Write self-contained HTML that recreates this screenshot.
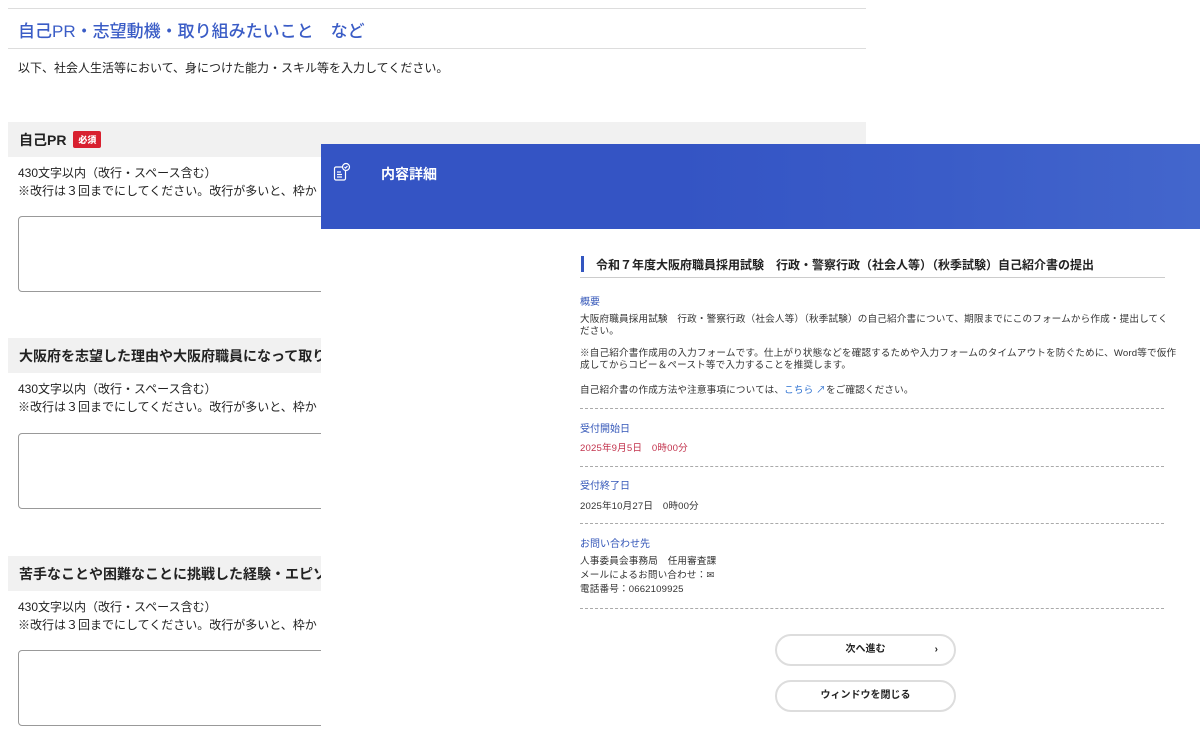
<!DOCTYPE html>
<html><head><meta charset="utf-8"><style>
*{margin:0;padding:0;box-sizing:border-box}
body{width:1200px;height:752px;overflow:hidden;background:#fff;font-family:"Liberation Sans","Noto Sans CJK JP",sans-serif;color:#222;position:relative}
.a{position:absolute;white-space:nowrap}
.band{position:absolute;left:8px;width:858px;height:35px;background:#f1f1f1}
.band span{position:absolute;left:11px;top:8px;font-size:14px;font-weight:bold}
.ta{position:absolute;left:18px;width:320px;height:76px;border:1.5px solid #999;border-radius:4px}
.s{font-size:12px}
.rp{position:absolute;left:321px;top:144px;width:879px;height:608px;background:#fff}
.hd{position:absolute;left:0;top:0;width:879px;height:85px;background:linear-gradient(90deg,#3454c4 0%,#3454c4 40%,#3a5cc8 70%,#4366cc 100%)}
.t10{font-size:9.6px;color:#333;letter-spacing:.15px}
.lab{font-size:10px;color:#3356b8}
.dash{position:absolute;left:580px;width:584px;border-top:1px dashed #aaa}
.btn{position:absolute;left:775px;width:181px;height:32px;border:2px solid #ddd;border-radius:16px;font-size:10px;font-weight:bold;text-align:center;line-height:28px}
</style></head><body>
<div class="a" style="left:8px;top:8px;width:858px;border-top:1px solid #ddd"></div>
<div class="a" style="left:18px;top:17px;font-size:17px;color:#3a5cc6;font-weight:500">自己PR・志望動機・取り組みたいこと　など</div>
<div class="a" style="left:8px;top:48px;width:858px;border-top:1px solid #ddd"></div>
<div class="a s" style="left:18px;top:59px">以下、社会人生活等において、身につけた能力・スキル等を入力してください。</div>

<div class="band" style="top:122px"><span>自己PR <b style="display:inline-block;background:#d8202f;color:#fff;font-size:9px;padding:2px 5px;border-radius:2px;vertical-align:2px;margin-left:3px">必須</b></span></div>
<div class="a s" style="left:18px;top:164px;line-height:18px">430文字以内（改行・スペース含む）<br>※改行は３回までにしてください。改行が多いと、枠か</div>
<div class="ta" style="top:216px"></div>

<div class="band" style="top:338px"><span>大阪府を志望した理由や大阪府職員になって取り組</span></div>
<div class="a s" style="left:18px;top:380px;line-height:18px">430文字以内（改行・スペース含む）<br>※改行は３回までにしてください。改行が多いと、枠か</div>
<div class="ta" style="top:433px"></div>

<div class="band" style="top:556px"><span>苦手なことや困難なことに挑戦した経験・エピソー</span></div>
<div class="a s" style="left:18px;top:598px;line-height:18px">430文字以内（改行・スペース含む）<br>※改行は３回までにしてください。改行が多いと、枠か</div>
<div class="ta" style="top:650px"></div>

<div class="rp">
<div class="hd">
<svg style="position:absolute;left:12px;top:18px" width="18" height="20" viewBox="0 0 18 20" fill="none" stroke="#fff" stroke-width="1.2"><rect x="1.5" y="5" width="11" height="13" rx="1.5"/><line x1="4" y1="10" x2="8" y2="10"/><line x1="4" y1="12.5" x2="9" y2="12.5"/><line x1="4" y1="15" x2="9" y2="15"/><circle cx="13" cy="5" r="3.5" fill="#3454c4"/><path d="M11.5 5l1 1 2-2"/></svg>
<div class="a" style="left:60px;top:20px;color:#fff;font-size:14px;font-weight:bold">内容詳細</div>
</div>
</div>
<div class="a" style="left:581px;top:256px;width:3px;height:16px;background:#3356c0"></div>
<div class="a" style="left:596px;top:256px;font-size:12px;font-weight:bold">令和７年度大阪府職員採用試験　行政・警察行政（社会人等）（秋季試験）自己紹介書の提出</div>
<div class="a" style="left:580px;top:277px;width:585px;border-top:1px solid #ccc"></div>
<div class="a lab" style="left:580px;top:293px">概要</div>
<div class="a t10" style="left:580px;top:314px;line-height:12px">大阪府職員採用試験　行政・警察行政（社会人等）（秋季試験）の自己紹介書について、期限までにこのフォームから作成・提出してく<br>ださい。</div>
<div class="a t10" style="left:580px;top:348px;line-height:12px">※自己紹介書作成用の入力フォームです。仕上がり状態などを確認するためや入力フォームのタイムアウトを防ぐために、Word等で仮作<br>成してからコピー＆ペースト等で入力することを推奨します。</div>
<div class="a t10" style="left:580px;top:382px">自己紹介書の作成方法や注意事項については、<span style="color:#2a6fd0">こちら ↗</span>をご確認ください。</div>
<div class="dash" style="top:408px"></div>
<div class="a lab" style="left:580px;top:420px">受付開始日</div>
<div class="a t10" style="left:580px;top:440px;color:#c2334d">2025年9月5日　0時00分</div>
<div class="dash" style="top:466px"></div>
<div class="a lab" style="left:580px;top:477px">受付終了日</div>
<div class="a t10" style="left:580px;top:498px">2025年10月27日　0時00分</div>
<div class="dash" style="top:523px"></div>
<div class="a lab" style="left:580px;top:535px">お問い合わせ先</div>
<div class="a t10" style="left:580px;top:555px;line-height:14px">人事委員会事務局　任用審査課<br>メールによるお問い合わせ：✉<br>電話番号：0662109925</div>
<div class="dash" style="top:608px"></div>
<div class="btn" style="top:634px">次へ進む<span style="position:absolute;right:16px">›</span></div>
<div class="btn" style="top:680px">ウィンドウを閉じる</div>
</body></html>
